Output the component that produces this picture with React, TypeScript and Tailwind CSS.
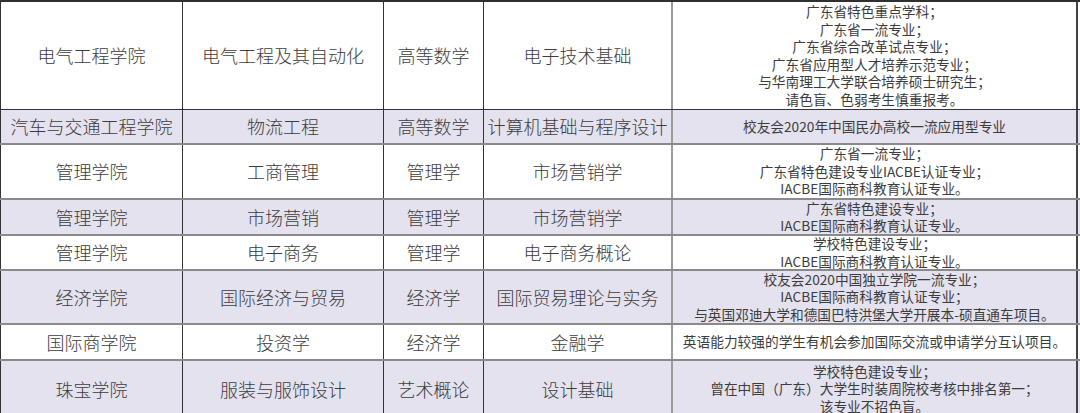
const rows = [
  {
    h: "h-[108px]",
    shade: false,
    college: "电气工程学院",
    major: "电气工程及其自动化",
    subject: "高等数学",
    course: "电子技术基础",
    notes: [
      "广东省特色重点学科；",
      "广东省一流专业；",
      "广东省综合改革试点专业；",
      "广东省应用型人才培养示范专业；",
      "与华南理工大学联合培养硕士研究生；",
      "请色盲、色弱考生慎重报考。",
    ],
  },
  {
    h: "h-[35px]",
    shade: true,
    college: "汽车与交通工程学院",
    major: "物流工程",
    subject: "高等数学",
    course: "计算机基础与程序设计",
    notes: ["校友会2020年中国民办高校一流应用型专业"],
  },
  {
    h: "h-[55px]",
    shade: false,
    college: "管理学院",
    major: "工商管理",
    subject: "管理学",
    course: "市场营销学",
    notes: ["广东省一流专业；", "广东省特色建设专业IACBE认证专业；", "IACBE国际商科教育认证专业。"],
  },
  {
    h: "h-[36px]",
    shade: true,
    college: "管理学院",
    major: "市场营销",
    subject: "管理学",
    course: "市场营销学",
    notes: ["广东省特色建设专业；", "IACBE国际商科教育认证专业。"],
  },
  {
    h: "h-[35px]",
    shade: false,
    college: "管理学院",
    major: "电子商务",
    subject: "管理学",
    course: "电子商务概论",
    notes: ["学校特色建设专业；", "IACBE国际商科教育认证专业。"],
  },
  {
    h: "h-[54px]",
    shade: true,
    college: "经济学院",
    major: "国际经济与贸易",
    subject: "经济学",
    course: "国际贸易理论与实务",
    notes: [
      "校友会2020中国独立学院一流专业；",
      "IACBE国际商科教育认证专业；",
      "与英国邓迪大学和德国巴特洪堡大学开展本-硕直通车项目。",
    ],
  },
  {
    h: "h-[36px]",
    shade: false,
    college: "国际商学院",
    major: "投资学",
    subject: "经济学",
    course: "金融学",
    notes: ["英语能力较强的学生有机会参加国际交流或申请学分互认项目。"],
  },
  {
    h: "h-[58px]",
    shade: true,
    college: "珠宝学院",
    major: "服装与服饰设计",
    subject: "艺术概论",
    course: "设计基础",
    notes: ["学校特色建设专业；", "曾在中国（广东）大学生时装周院校考核中排名第一；", "该专业不招色盲。"],
  },
];

const cell = "flex items-center justify-center text-center shrink-0";

export default function App() {
  return (
    <div className="w-[1080px] h-[413px] overflow-hidden bg-white font-['Noto_Sans_CJK_SC','Noto_Sans',sans-serif] text-[#3c3c3c]">
      <div className="w-[1080px] border-t-2 border-[#2f2f2f]">
        {rows.map((r, i) => (
          <div
            key={i}
            className={`flex ${r.h} ${r.shade ? "bg-[#e5e2ef]" : "bg-white"} ${
              i === 0 ? "border-b-[1.5px] border-[#333]" : "border-b-2 border-[#8a8a8a]"
            }`}
          >
            <div className={`${cell} w-[183px] border-l border-r border-[#333] text-[18px] font-light`}>{r.college}</div>
            <div className={`${cell} w-[201px] border-r border-[#333] text-[18px] font-light`}>{r.major}</div>
            <div className={`${cell} w-[100px] border-r border-[#333] text-[18px] font-light`}>{r.subject}</div>
            <div className={`${cell} w-[189px] border-r-2 border-[#9a9a9a] text-[18px] font-light`}>{r.course}</div>
            <div className={`${cell} flex-col w-[405px] border-r-2 border-[#444] text-[13.7px] leading-[17.5px]`}>
              {r.notes.map((n, j) => (
                <div key={j} className="whitespace-nowrap">
                  {n}
                </div>
              ))}
            </div>
          </div>
        ))}
      </div>
    </div>
  );
}
